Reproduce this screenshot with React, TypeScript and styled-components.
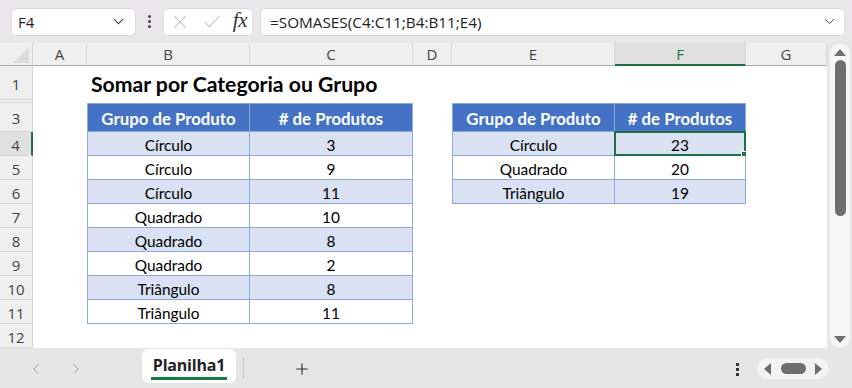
import styled, { createGlobalStyle } from "styled-components";
import { ChevronDown, ChevronLeft, ChevronRight, X, Check, Plus } from "lucide-react";

const GlobalStyle = createGlobalStyle`
  html, body { margin: 0; padding: 0; }
  body { width: 852px; height: 388px; overflow: hidden; background: #e6e6e6; }
`;

const COLS = ["A", "B", "C", "D", "E", "F", "G"];
const WIDTHS = [33, 54, 163, 163, 39, 163, 131, 81];

type Tone = "none" | "head" | "band" | "plain";

interface CellInfo {
  text?: string;
  tone?: Tone;
  left?: boolean;
  top?: boolean;
  selected?: boolean;
  title?: boolean;
}

interface RowInfo {
  n: string;
  h: number;
  cells: Record<string, CellInfo>;
}

const leftData: [string, string][] = [
  ["Círculo", "3"],
  ["Círculo", "9"],
  ["Círculo", "11"],
  ["Quadrado", "10"],
  ["Quadrado", "8"],
  ["Quadrado", "2"],
  ["Triângulo", "8"],
  ["Triângulo", "11"],
];

const rightData: [string, string][] = [
  ["Círculo", "23"],
  ["Quadrado", "20"],
  ["Triângulo", "19"],
];

function buildRows(): RowInfo[] {
  const rows: RowInfo[] = [
    { n: "1", h: 34, cells: { B: { text: "Somar por Categoria ou Grupo", title: true } } },
    { n: "2", h: 3, cells: {} },
    {
      n: "3",
      h: 29,
      cells: {
        B: { text: "Grupo de Produto", tone: "head", left: true, top: true },
        C: { text: "# de Produtos", tone: "head", top: true },
        E: { text: "Grupo de Produto", tone: "head", left: true, top: true },
        F: { text: "# de Produtos", tone: "head", top: true },
      },
    },
  ];
  leftData.forEach(([g, v], i) => {
    const tone: Tone = i % 2 === 0 ? "band" : "plain";
    const cells: Record<string, CellInfo> = {
      B: { text: g, tone, left: true },
      C: { text: v, tone },
    };
    const r = rightData[i];
    if (r) {
      cells.E = { text: r[0], tone, left: true };
      cells.F = { text: r[1], tone, selected: i === 0 };
    }
    rows.push({ n: String(i + 4), h: 24, cells });
  });
  rows.push({ n: "12", h: 24, cells: {} });
  return rows;
}

const rows = buildRows();

export default function App() {
  return (
    <Page>
      <GlobalStyle />
      <TopBar>
        <NameBox>
          <span>F4</span>
          <ChevronDown size={17} strokeWidth={1.6} color="#444" />
        </NameBox>
        <VDots>
          <i />
          <i />
          <i />
        </VDots>
        <FxBox>
          <X size={22} strokeWidth={1.1} color="#bdbdbd" />
          <Check size={22} strokeWidth={1.1} color="#bdbdbd" />
          <Fx>fx</Fx>
        </FxBox>
        <FormulaBox>
          <span>=SOMASES(C4:C11;B4:B11;E4)</span>
          <ChevronDown size={17} strokeWidth={1.4} color="#444" />
        </FormulaBox>
      </TopBar>

      <SheetArea>
        <Grid
          style={{
            gridTemplateColumns: WIDTHS.map((w) => `${w}px`).join(" "),
            gridTemplateRows: `23px ${rows.map((r) => `${r.h}px`).join(" ")}`,
          }}
        >
          <Corner>
            <CornerTri />
          </Corner>
          {COLS.map((c) => (
            <ColHead key={c} $active={c === "F"}>
              {c}
            </ColHead>
          ))}
          {rows.map((r) => (
            <Row key={r.n} r={r} />
          ))}
        </Grid>
        <VScroll>
          <Tri $dir="up" />
          <VThumb />
          <Tri $dir="down" />
        </VScroll>
      </SheetArea>

      <TabBar>
        <NavArrows>
          <ChevronLeft size={18} strokeWidth={1.3} color="#9a9a9a" />
          <ChevronRight size={18} strokeWidth={1.3} color="#9a9a9a" />
        </NavArrows>
        <SheetTab>
          Planilha1
          <TabLine />
        </SheetTab>
        <TabSep />
        <AddBtn>
          <Plus size={18} strokeWidth={1.6} color="#333" />
        </AddBtn>
        <Spacer />
        <SmallDots>
          <i />
          <i />
          <i />
        </SmallDots>
        <HScroll>
          <Tri $dir="left" />
          <HThumb />
          <Tri $dir="right" />
        </HScroll>
      </TabBar>
    </Page>
  );
}

function Row({ r }: { r: RowInfo }) {
  return (
    <>
      <RowHead $active={r.n === "4"} $hidden={r.h < 6}>
        {r.h < 6 ? "" : r.n}
      </RowHead>
      {COLS.map((c) => {
        const cell = r.cells[c];
        if (!cell) return <Cell key={c} $tone="none" />;
        if (cell.title) return <TitleCell key={c}>{cell.text}</TitleCell>;
        return (
          <Cell key={c} $tone={cell.tone ?? "none"} $left={cell.left} $top={cell.top}>
            {cell.text}
            {cell.selected && (
              <Selection>
                <Handle />
              </Selection>
            )}
          </Cell>
        );
      })}
    </>
  );
}

const Page = styled.div`
  width: 852px;
  height: 388px;
  display: flex;
  flex-direction: column;
  background: #e6e6e6;
`;

const TopBar = styled.div`
  height: 43px;
  flex: none;
  display: flex;
  align-items: center;
  padding: 0 7px 0 11px;
  background: #e9e7ea;
  box-sizing: border-box;
`;

const boxBase = `
  height: 28px;
  box-sizing: border-box;
  background: #ffffff;
  border: 1px solid #dcdadc;
  border-radius: 5px;
  display: flex;
  align-items: center;
`;

const NameBox = styled.div`
  ${boxBase}
  width: 125px;
  justify-content: space-between;
  padding: 0 8px 0 6px;
  font-family: "Open Sans", "Noto Sans", sans-serif;
  font-size: 15px;
  color: #222;
`;

const VDots = styled.div`
  width: 27px;
  display: flex;
  flex-direction: column;
  align-items: center;
  gap: 2px;
  i {
    width: 3px;
    height: 3px;
    background: #444;
    border-radius: 50%;
  }
`;

const FxBox = styled.div`
  ${boxBase}
  width: 90px;
  justify-content: space-between;
  padding: 0 5px 0 5px;
`;

const Fx = styled.span`
  font-family: "Liberation Serif", serif;
  font-style: italic;
  font-size: 21px;
  color: #333;
  letter-spacing: -0.5px;
  margin-top: -3px;
`;

const FormulaBox = styled.div`
  ${boxBase}
  margin-left: 7px;
  flex: 1;
  justify-content: space-between;
  padding: 0 6px 0 9px;
  font-family: "Open Sans", "Noto Sans", sans-serif;
  font-size: 15.3px;
  color: #222;
`;

const SheetArea = styled.div`
  height: 305px;
  flex: none;
  display: flex;
`;

const Grid = styled.div`
  width: 827px;
  display: grid;
  background: #ffffff;
`;

const Corner = styled.div`
  background: #efefef;
  border-right: 1px solid #d4d4d4;
  border-bottom: 1px solid #a9a9a9;
  box-sizing: border-box;
  display: flex;
  align-items: flex-end;
  justify-content: flex-end;
  padding: 0 3px 2px 0;
`;

const CornerTri = styled.div`
  width: 0;
  height: 0;
  border-left: 16px solid transparent;
  border-bottom: 16px solid #dcdcdc;
`;

const ColHead = styled.div<{ $active?: boolean }>`
  box-sizing: border-box;
  background: ${(p) => (p.$active ? "#e0e0e0" : "#efefef")};
  border-right: 1px solid #d8d8d8;
  border-bottom: ${(p) => (p.$active ? "2px solid #1e7145" : "1px solid #a9a9a9")};
  display: flex;
  align-items: center;
  justify-content: center;
  font-family: "Open Sans", "Noto Sans", sans-serif;
  font-size: 15px;
  color: ${(p) => (p.$active ? "#1e7145" : "#444")};
`;

const RowHead = styled.div<{ $active?: boolean; $hidden?: boolean }>`
  box-sizing: border-box;
  background: ${(p) => (p.$active ? "#e0e0e0" : "#efefef")};
  border-right: ${(p) => (p.$active ? "2px solid #1e7145" : "1px solid #d4d4d4")};
  border-bottom: 1px solid #d8d8d8;
  display: flex;
  align-items: center;
  justify-content: center;
  overflow: hidden;
  font-family: "Open Sans", "Noto Sans", sans-serif;
  font-size: 15px;
  color: #444;
  padding-top: ${(p) => (p.$hidden ? 0 : 2)}px;
`;

const toneBg: Record<Tone, string> = {
  none: "#ffffff",
  head: "#4472c4",
  band: "#d9e1f2",
  plain: "#ffffff",
};

const Cell = styled.div<{ $tone: Tone; $left?: boolean; $top?: boolean }>`
  position: relative;
  box-sizing: border-box;
  background: ${(p) => toneBg[p.$tone]};
  display: flex;
  align-items: center;
  justify-content: center;
  font-family: "Lato", "Open Sans", sans-serif;
  font-size: ${(p) => (p.$tone === "head" ? 16.8 : 15.4)}px;
  font-weight: ${(p) => (p.$tone === "head" ? 700 : 400)};
  color: ${(p) => (p.$tone === "head" ? "#ffffff" : "#000")};
  padding-top: ${(p) => (p.$tone === "head" ? 1 : 2)}px;
  ${(p) =>
    p.$tone !== "none" &&
    `
    border-right: 1px solid #8ea9db;
    border-bottom: 1px solid #8ea9db;
    ${p.$left ? "border-left: 1px solid #8ea9db;" : ""}
    ${p.$top ? "border-top: 1px solid #8ea9db;" : ""}
  `}
`;

const TitleCell = styled.div`
  position: relative;
  z-index: 1;
  display: flex;
  align-items: flex-end;
  padding: 0 0 3px 4px;
  white-space: nowrap;
  overflow: visible;
  font-family: "Lato", "Open Sans", sans-serif;
  font-size: 21.2px;
  font-weight: 700;
  color: #000;
`;

const Selection = styled.div`
  position: absolute;
  left: -1px;
  top: -1px;
  right: -1px;
  bottom: -1px;
  border: 2px solid #1e7145;
  pointer-events: none;
`;

const Handle = styled.div`
  position: absolute;
  right: -5px;
  bottom: -5px;
  width: 6px;
  height: 6px;
  background: #1e7145;
  border: 1px solid #fff;
`;

const VScroll = styled.div`
  width: 20px;
  margin: 0 2px 0 3px;
  background: #f6f6f6;
  border-radius: 10px;
  display: flex;
  flex-direction: column;
  align-items: center;
  padding: 6px 0 5px;
  box-sizing: border-box;
`;

const VThumb = styled.div`
  width: 11px;
  height: 156px;
  margin-top: 4px;
  background: #6e6e6e;
  border-radius: 6px;
  margin-bottom: auto;
`;

const Tri = styled.div<{ $dir: "up" | "down" | "left" | "right" }>`
  width: 0;
  height: 0;
  flex: none;
  ${(p) =>
    p.$dir === "up"
      ? "border-left: 6px solid transparent; border-right: 6px solid transparent; border-bottom: 7px solid #6e6e6e;"
      : p.$dir === "down"
      ? "border-left: 6px solid transparent; border-right: 6px solid transparent; border-top: 7px solid #6e6e6e;"
      : p.$dir === "left"
      ? "border-top: 6px solid transparent; border-bottom: 6px solid transparent; border-right: 7px solid #6e6e6e;"
      : "border-top: 6px solid transparent; border-bottom: 6px solid transparent; border-left: 7px solid #6e6e6e;"}
`;

const TabBar = styled.div`
  flex: 1;
  display: flex;
  align-items: center;
  background: #e6e6e6;
  padding-right: 23px;
`;

const NavArrows = styled.div`
  width: 142px;
  display: flex;
  align-items: center;
  gap: 22px;
  padding-left: 27px;
  box-sizing: border-box;
  margin-top: 1px;
`;

const SheetTab = styled.div`
  position: relative;
  width: 94px;
  height: 34px;
  align-self: flex-start;
  margin-top: 1px;
  background: #ffffff;
  border-radius: 6px;
  display: flex;
  align-items: center;
  justify-content: center;
  font-family: "Open Sans", "Noto Sans", sans-serif;
  font-size: 16px;
  font-weight: 700;
  color: #222;
  padding-bottom: 2px;
  box-sizing: border-box;
  letter-spacing: -0.2px;
`;

const TabLine = styled.div`
  position: absolute;
  left: 9px;
  right: 9px;
  bottom: 3px;
  height: 3px;
  background: #107c41;
`;

const TabSep = styled.div`
  width: 1px;
  height: 20px;
  background: #c6c6c6;
  margin: 0 0 0 7px;
`;

const AddBtn = styled.div`
  margin-left: 49px;
  display: flex;
  margin-top: 2px;
`;

const Spacer = styled.div`
  flex: 1;
`;

const SmallDots = styled.div`
  display: flex;
  flex-direction: column;
  gap: 2px;
  margin-right: 18px;
  margin-top: 3px;
  i {
    width: 3px;
    height: 3px;
    background: #333;
  }
`;

const HScroll = styled.div`
  width: 72px;
  height: 21px;
  background: #f3f3f3;
  border-radius: 11px;
  display: flex;
  align-items: center;
  justify-content: space-between;
  padding: 0 7px 0 7px;
  box-sizing: border-box;
  margin-top: 1px;
`;

const HThumb = styled.div`
  width: 25px;
  height: 11px;
  background: #6e6e6e;
  border-radius: 6px;
`;
